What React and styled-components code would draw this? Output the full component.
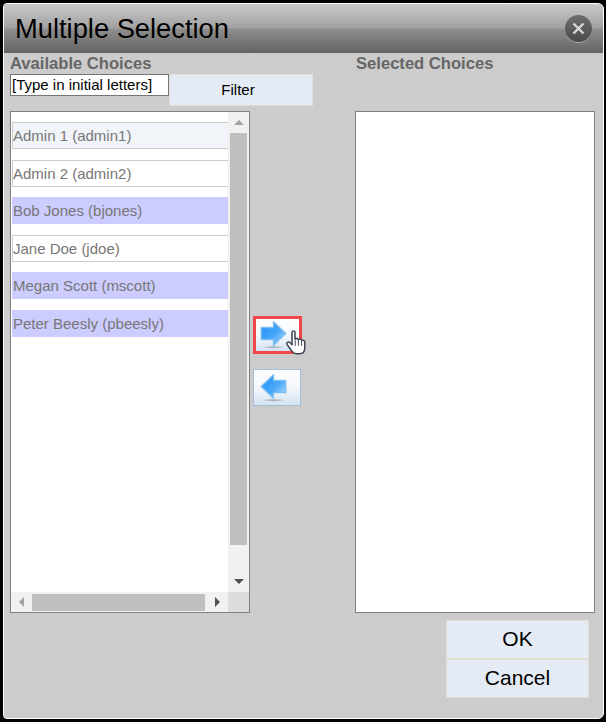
import React from "react"
import styled, { createGlobalStyle } from "styled-components"

const Global = createGlobalStyle`
html, body {
  margin: 0;
  padding: 0;
  background: #000;
}
* {
  box-sizing: border-box;
}
`

const Shell = styled.div`
  width: 606px;
  height: 722px;
  padding: 3px 2px 3px 3px;
  background: #000;
  font-family: "Liberation Sans", Arial, sans-serif;
`

const Dialog = styled.div`
  position: relative;
  height: 716px;
  border: 1px solid #fff;
  border-radius: 4px 6px 6px 4px;
  background: #ccc;
  overflow: hidden;
`

const Header = styled.div`
  display: flex;
  align-items: center;
  justify-content: space-between;
  height: 49px;
  padding: 0 11px 0 11px;
  background: linear-gradient(#c9c9c9 0%, #a2a2a2 48%, #8e8e8e 52%, #636363 100%);
`

const Title = styled.h1`
  margin: 0;
  font-size: 27.3px;
  font-weight: normal;
  color: #000;
`

const Close = styled.div`
  display: flex;
  align-items: center;
  justify-content: center;
  width: 27px;
  height: 27px;
  border-radius: 50%;
  background: linear-gradient(#6e6e6e, #4a4a4a);
  box-shadow: 0 1px 0 #a8a8a8;
`

const Columns = styled.div`
  display: grid;
  grid-template-columns: 240px 105px 240px;
  padding-left: 6px;
`

const Column = styled.div`
  display: flex;
  flex-direction: column;
`

const Label = styled.div`
  height: 21px;
  padding-top: 2px;
  padding-left: ${props => props.$indent || 0}px;
  font-size: 16.6px;
  line-height: 18px;
  font-weight: bold;
  color: #666;
`

const FilterRow = styled.div`
  display: flex;
  align-items: flex-start;
  width: 303px;
  height: 37px;
`

const FilterInput = styled.div`
  width: 159px;
  height: 22px;
  padding: 1px 0 0 1px;
  border: 1px solid #777;
  background: #fff;
  font-size: 15px;
  line-height: 17px;
  color: #000;
`

const Button = styled.div`
  display: flex;
  align-items: center;
  justify-content: center;
  width: ${props => props.$w}px;
  height: ${props => props.$h}px;
  padding-right: ${props => props.$shift || 0}px;
  padding-bottom: 2px;
  border: 1px solid #e2ded2;
  background: #e4ebf4;
  font-size: ${props => props.$size}px;
  color: #000;
`

const ListBox = styled.div`
  position: relative;
  width: 240px;
  height: 502px;
  border: 1px solid #808080;
  background: #fff;
  display: grid;
  grid-template-columns: 1fr 21px;
  grid-template-rows: 1fr 20px;
`

const Items = styled.div`
  display: flex;
  flex-direction: column;
  gap: 10.5px;
  padding: 10px 0 0 1px;
`

const Item = styled.div`
  height: 27px;
  padding-top: ${props => (props.$selected ? 1 : 0)}px;
  padding-left: ${props => (props.$selected ? 1 : 0)}px;
  border: solid #ccc;
  border-width: ${props => (props.$selected ? "0" : "1px 0 1px 1px")};
  background: ${props => (props.$selected ? "#ccf" : props.$hover ? "#f1f4f9" : "#fff")};
  font-size: 15px;
  line-height: 25px;
  color: #777;
`

const VBar = styled.div`
  display: flex;
  flex-direction: column;
  align-items: center;
  background: #f1f1f1;
`

const HBar = styled.div`
  display: flex;
  align-items: center;
  background: #f1f1f1;
`

const ArrowCell = styled.div`
  display: flex;
  align-items: center;
  justify-content: center;
  flex: none;
  width: 21px;
  height: 21px;
`

const Thumb = styled.div`
  background: #bfbfbf;
  ${props => (props.$vertical
    ? "width: 17px; height: 412px;"
    : "width: 173px; height: 17px;")}
`

const Spacer = styled.div`
  flex: 1;
`

const Corner = styled.div`
  background: #dcdcdc;
`

const Triangle = styled.div`
  width: 0;
  height: 0;
  border-style: solid;
  border-color: transparent;
  ${props => props.$dir === "up" && `border-width: 0 5px 5px; border-bottom-color: ${props.$color};`}
  ${props => props.$dir === "down" && `border-width: 5px 5px 0; border-top-color: ${props.$color};`}
  ${props => props.$dir === "left" && `border-width: 5px 5px 5px 0; border-right-color: ${props.$color};`}
  ${props => props.$dir === "right" && `border-width: 5px 0 5px 5px; border-left-color: ${props.$color};`}
`

const Middle = styled.div`
  display: flex;
  flex-direction: column;
  align-items: flex-start;
  gap: 15px;
  padding: 263px 0 0 3px;
`

const MoveButton = styled.div`
  position: relative;
  display: flex;
  align-items: center;
  justify-content: center;
  width: ${props => (props.$active ? 49 : 48)}px;
  height: ${props => (props.$active ? 38 : 37)}px;
  padding-right: 8px;
  border: ${props => (props.$active ? "3px solid #f04848" : "1px solid #a3bedb")};
  background: linear-gradient(#fcfdfe, #f4f7fb 50%, #d5e3f3);
`

const HandCursor = styled.svg`
  position: absolute;
  left: 29px;
  top: 10px;
  width: 24px;
  height: 28px;
`

const Footer = styled.div`
  display: flex;
  flex-direction: column;
  align-items: flex-end;
  padding: 7px 14px 0 0;
`

const ArrowIcon = ({ flip, id }) => (
  <svg width="30" height="30" viewBox="0 0 30 30" style={flip ? { transform: "scaleX(-1)" } : undefined}>
    <defs>
      <linearGradient id={id} x1={flip ? 1 : 0} y1="0.1" x2={flip ? 0.1 : 0.9} y2="0.9">
        <stop offset="0" stopColor="#1f90f7" />
        <stop offset="0.6" stopColor="#4aa8fa" />
        <stop offset="1" stopColor="#a8d6fb" />
      </linearGradient>
      <radialGradient id={`${id}-shadow`}>
        <stop offset="0" stopColor="#70757c" stopOpacity="0.6" />
        <stop offset="1" stopColor="#70757c" stopOpacity="0" />
      </radialGradient>
    </defs>
    <ellipse cx="14.5" cy="27.2" rx="12" ry="1.6" fill={`url(#${id}-shadow)`} />
    <path
      d="M2.2 7.5 H14.5 V1.7 L26.8 13.5 L14.5 25.3 V19.5 H2.2 Z"
      fill={`url(#${id})`}
      stroke="#7dbdf0"
      strokeWidth="1.3"
      strokeLinejoin="round"
    />
  </svg>
)

const people = [
  { name: "Admin 1 (admin1)", hover: true },
  { name: "Admin 2 (admin2)" },
  { name: "Bob Jones (bjones)", selected: true },
  { name: "Jane Doe (jdoe)" },
  { name: "Megan Scott (mscott)", selected: true },
  { name: "Peter Beesly (pbeesly)", selected: true },
]

const App = () => {
  return (
    <Shell>
      <Global />
      <Dialog>
        <Header>
          <Title>Multiple Selection</Title>
          <Close>
            <svg width="15" height="15" viewBox="0 0 15 15">
              <path d="M2.5 2.5 L12.5 12.5 M12.5 2.5 L2.5 12.5" stroke="#d8d8d8" strokeWidth="2.4" />
            </svg>
          </Close>
        </Header>
        <Columns>
          <Column>
            <Label>Available Choices</Label>
            <FilterRow>
              <FilterInput>[Type in initial letters]</FilterInput>
              <Button $w={144} $h={32} $size={15} $shift={6}>Filter</Button>
            </FilterRow>
            <ListBox>
              <Items>
                {people.map(p => (
                  <Item key={p.name} $selected={p.selected} $hover={p.hover}>{p.name}</Item>
                ))}
              </Items>
              <VBar>
                <ArrowCell><Triangle $dir="up" $color="#a3a3a3" /></ArrowCell>
                <Thumb $vertical />
                <Spacer />
                <ArrowCell><Triangle $dir="down" $color="#505050" /></ArrowCell>
              </VBar>
              <HBar>
                <ArrowCell><Triangle $dir="left" $color="#a3a3a3" /></ArrowCell>
                <Thumb />
                <Spacer />
                <ArrowCell><Triangle $dir="right" $color="#505050" /></ArrowCell>
              </HBar>
              <Corner />
            </ListBox>
          </Column>
          <Middle>
            <MoveButton $active>
              <ArrowIcon id="arrow-right" />
              <HandCursor viewBox="0 0 24 30" preserveAspectRatio="none">
                <path
                  d="M7 3.5 C7 1.5 10 1.5 10 3.5 V11 C10.5 9.8 13 9.8 13.4 11.5 C14 10.4 16.4 10.6 16.7 12.4 C17.6 11.6 19.6 12 19.8 14 V20 C19.8 24 17.8 26.5 14.5 26.5 H11.5 C9 26.5 7.8 25.3 6.6 23.3 L2 16.5 C1 14.6 3.4 13 5 14.6 L7 16.8 Z"
                  fill="#fff"
                  stroke="#3c4250"
                  strokeWidth="1.5"
                  strokeLinejoin="round"
                />
                <path d="M10.2 12 V18 M13.4 12 V18 M16.6 13 V18" stroke="#3c4250" strokeWidth="1" />
              </HandCursor>
            </MoveButton>
            <MoveButton>
              <ArrowIcon flip id="arrow-left" />
            </MoveButton>
          </Middle>
          <Column>
            <Label $indent={1}>Selected Choices</Label>
            <FilterRow />
            <ListBox />
          </Column>
        </Columns>
        <Footer>
          <Button $w={143} $h={39} $size={21}>OK</Button>
          <Button $w={143} $h={39} $size={21}>Cancel</Button>
        </Footer>
      </Dialog>
    </Shell>
  )
}

export default App
